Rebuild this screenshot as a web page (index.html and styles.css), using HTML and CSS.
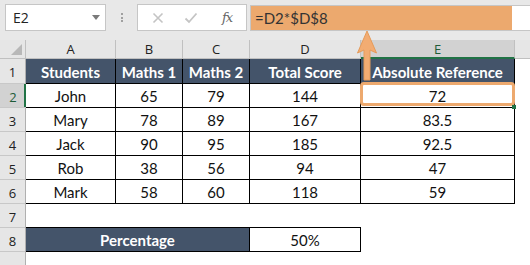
FILE: index.html
```html
<!DOCTYPE html>
<html>
<head>
<meta charset="utf-8">
<link rel="stylesheet" href="styles.css">
</head>
<body>
<div class="app">
  <div class="topbar">
    <div class="namebox"><span class="ref">E2</span><span class="caret"></span></div>
    <div class="grip"><i></i><i></i><i></i></div>
    <div class="fxbox">
      <svg class="ico" width="12" height="12" viewBox="0 0 12 12"><path d="M1.5 1.5 L10.5 10.5 M10.5 1.5 L1.5 10.5" stroke="#c4c4c4" stroke-width="1.6" fill="none"/></svg>
      <svg class="ico" width="14" height="12" viewBox="0 0 14 12"><path d="M1.5 6.5 L5 10 L12.5 1.5" stroke="#c4c4c4" stroke-width="1.8" fill="none"/></svg>
      <span class="fx">fx</span>
    </div>
    <div class="formula"><div class="formula-fill">=D2*$D$8</div></div>
  </div>

  <div class="colheads">
    <div class="corner"><span class="tri"></span></div>
    <div class="ch w-a">A</div>
    <div class="ch w-b">B</div>
    <div class="ch w-c">C</div>
    <div class="ch w-d">D</div>
    <div class="ch w-e sel">E</div>
    <div class="ch w-f"></div>
  </div>

  <div class="sheet">
    <div class="rowheads">
      <div class="rh first">1</div>
      <div class="rh sel">2</div>
      <div class="rh">3</div>
      <div class="rh">4</div>
      <div class="rh">5</div>
      <div class="rh">6</div>
      <div class="rh">7</div>
      <div class="rh">8</div>
      <div class="rh"></div>
    </div>
    <div class="cells">
      <div class="table">
        <div class="hd">Students</div>
        <div class="hd">Maths 1</div>
        <div class="hd">Maths 2</div>
        <div class="hd">Total Score</div>
        <div class="hd">Absolute Reference</div>

        <div class="c">John</div><div class="c">65</div><div class="c">79</div><div class="c">144</div><div class="c">72</div>
        <div class="c">Mary</div><div class="c">78</div><div class="c">89</div><div class="c">167</div><div class="c">83.5</div>
        <div class="c">Jack</div><div class="c">90</div><div class="c">95</div><div class="c">185</div><div class="c">92.5</div>
        <div class="c">Rob</div><div class="c">38</div><div class="c">56</div><div class="c">94</div><div class="c">47</div>
        <div class="c">Mark</div><div class="c">58</div><div class="c">60</div><div class="c">118</div><div class="c">59</div>
      </div>
      <div class="blank"></div>
      <div class="pct">
        <div class="hd">Percentage</div>
        <div class="c">50%</div>
      </div>
    </div>
  </div>

  <div class="selbox"></div>
  <div class="handle"></div>
  <svg class="arrow" width="24" height="54" viewBox="0 0 24 54">
    <polygon points="12,1 21.5,23 15,20 15,50 9,50 9,20 2.5,23" fill="#f2ac72" stroke="#e59b5a" stroke-width="1"/>
  </svg>
</div>
</body>
</html>
```

FILE: styles.css
```css
html, body {
  margin: 0;
  padding: 0;
}
body {
  width: 530px;
  height: 265px;
  overflow: hidden;
  background: #ffffff;
  font-family: "Lato", "Liberation Sans", sans-serif;
}
.app {
  position: relative;
  width: 530px;
  height: 265px;
  overflow: hidden;
  background: #ffffff;
}

/* ---------- top formula bar ---------- */
.topbar {
  height: 40px;
  background: #e8e8e8;
  display: flex;
  align-items: flex-start;
  box-sizing: border-box;
  padding-top: 4px;
}
.namebox {
  margin-left: 5px;
  width: 101px;
  height: 27px;
  box-sizing: border-box;
  background: #fff;
  border: 1px solid #c6c6c6;
  display: flex;
  align-items: center;
  justify-content: space-between;
  padding: 0 5px 0 7px;
}
.ref {
  font-family: "Open Sans", "Liberation Sans", sans-serif;
  font-size: 14px;
  color: #222;
}
.caret {
  width: 0;
  height: 0;
  border-left: 4px solid transparent;
  border-right: 4px solid transparent;
  border-top: 5px solid #7a7a7a;
}
.grip {
  width: 31px;
  height: 27px;
  display: flex;
  flex-direction: column;
  align-items: center;
  justify-content: center;
  gap: 1.5px;
}
.grip i {
  display: block;
  width: 2px;
  height: 2px;
  background: #a0a0a0;
}
.fxbox {
  width: 110px;
  height: 27px;
  box-sizing: border-box;
  background: #fff;
  border: 1px solid #c6c6c6;
  display: flex;
  align-items: center;
  padding: 0 6px 0 14px;
  gap: 20px;
}
.fx {
  font-family: "DejaVu Serif", "Liberation Serif", serif;
  font-style: italic;
  font-size: 13px;
  color: #666;
  margin-left: 4px;
  letter-spacing: -1px;
}
.formula {
  margin-left: 3px;
  margin-top: 1px;
  flex: 1;
  height: 26px;
  box-sizing: border-box;
  background: #fff;
  border: 1px solid #c6c6c6;
  border-right: none;
  padding-right: 18px;
}
.formula-fill {
  height: 100%;
  background: #eca96e;
  font-size: 15px;
  color: #333;
  line-height: 24px;
  padding-left: 4px;
}

/* ---------- column headers ---------- */
.colheads {
  display: flex;
  height: 19px;
  background: #e6e6e6;
  box-sizing: border-box;
  border-bottom: 1px solid #c0c0c0;
}
.corner {
  width: 26px;
  box-sizing: border-box;
  border-right: 1px solid #c0c0c0;
  position: relative;
}
.tri {
  position: absolute;
  right: 3px;
  bottom: 3px;
  width: 0;
  height: 0;
  border-left: 11px solid transparent;
  border-bottom: 11px solid #b8b8b8;
}
.ch {
  box-sizing: border-box;
  border-right: 1px solid #c0c0c0;
  font-family: "Open Sans", "Liberation Sans", sans-serif;
  font-size: 13px;
  color: #222;
  text-align: center;
  line-height: 18px;
}
.ch.sel {
  background: #d2d2d2;
  color: #1e5c38;
  border-bottom: 2px solid #217346;
  margin-bottom: -1px;
}
.w-a { width: 90px; }
.w-b { width: 67px; }
.w-c { width: 67px; }
.w-d { width: 111px; }
.w-e { width: 154px; }
.w-f { flex: 1; border-right: none; }

/* ---------- body ---------- */
.sheet {
  display: flex;
}
.rowheads {
  width: 26px;
  flex: none;
  background: #e6e6e6;
  box-sizing: border-box;
  border-right: 1px solid #b0b0b0;
}
.rh {
  height: 24px;
  box-sizing: border-box;
  border-bottom: 1px solid #c8c8c8;
  font-family: "Open Sans", "Liberation Sans", sans-serif;
  font-size: 13px;
  color: #222;
  text-align: center;
  line-height: 26px;
}
.rh.first { height: 25px; }
.rh.sel {
  background: #d2d2d2;
  color: #1e5c38;
  box-shadow: inset -2px 0 0 #217346;
  margin-right: -1px;
}

.cells {
  flex: 1;
}
.table {
  display: grid;
  grid-template-columns: 89px 66px 66px 110px 153px;
  grid-template-rows: 24px repeat(5, 23px);
  gap: 1px;
  width: max-content;
  background: #000;
  padding: 0 1px 1px 0;
}
.hd {
  background: #44546a;
  color: #fff;
  font-weight: 700;
  font-size: 15px;
  display: flex;
  align-items: center;
  justify-content: center;
  white-space: nowrap;
  padding-top: 1px;
}
.c {
  background: #fff;
  color: #111;
  font-size: 15px;
  display: flex;
  align-items: center;
  justify-content: center;
  padding-top: 1px;
}
.blank {
  height: 23px;
}
.pct {
  display: grid;
  grid-template-columns: 223px 110px;
  grid-template-rows: 23px;
  gap: 1px;
  width: max-content;
  background: #000;
  padding: 1px 1px 1px 0;
}

/* ---------- overlays ---------- */
.selbox {
  position: absolute;
  left: 360px;
  top: 82px;
  width: 155px;
  height: 24px;
  box-sizing: border-box;
  border: 3px solid #eda96e;
  border-radius: 4px;
}
.handle {
  position: absolute;
  left: 512px;
  top: 105px;
  width: 4px;
  height: 4px;
  background: #217346;
}
.arrow {
  position: absolute;
  left: 355px;
  top: 30px;
}
```
